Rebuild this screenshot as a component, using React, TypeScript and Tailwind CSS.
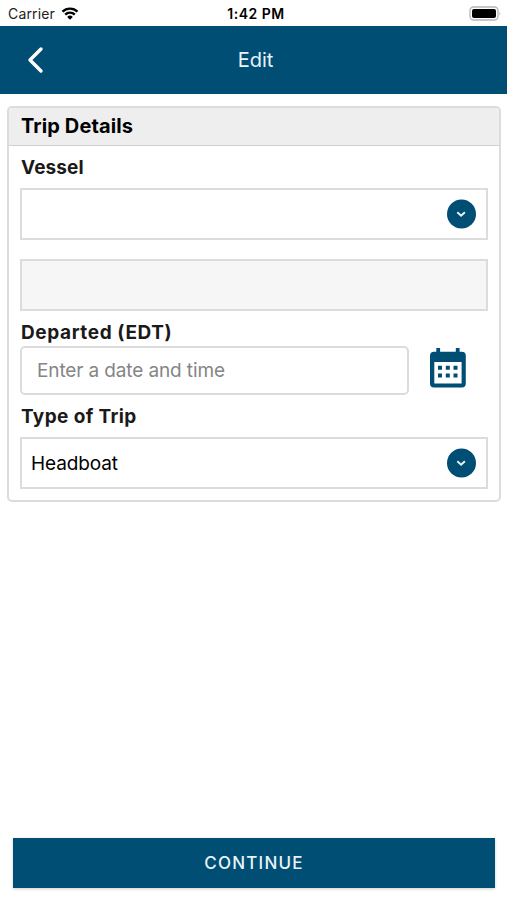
import type { ReactNode } from "react";

export default function App() {
  return (
    <div className="flex h-[900px] w-[507px] flex-col overflow-hidden bg-white font-['Inter','Liberation_Sans',sans-serif] text-[#111]">
      <StatusBar />
      <NavBar title="Edit" />

      <main className="flex flex-1 flex-col px-[7px] pt-3">
        <TripDetails />
      </main>

      <footer className="pr-3 pb-3 pl-[13px]">
        <button
          type="button"
          className="block h-[50px] w-full bg-[#004e73] text-center text-[17px] leading-[50px] font-medium tracking-[1.2px] text-[#e8f3fa] shadow-[0_1px_3px_rgba(0,0,0,0.2)]"
        >
          CONTINUE
        </button>
      </footer>
    </div>
  );
}

function StatusBar() {
  return (
    <div className="grid h-[26px] grid-cols-3 items-center pr-[6px] pl-2 text-black">
      <div className="flex items-center gap-[6px]">
        <span className="pt-px text-[14px] leading-[25px] tracking-[0.15px] text-[#222]">Carrier</span>
        <WifiIcon />
      </div>
      <span className="pt-px pl-[3px] text-center text-[14px] leading-[25px] font-semibold tracking-[0.5px]">
        1:42 PM
      </span>
      <BatteryIcon />
    </div>
  );
}

function NavBar({ title }: { title: string }) {
  return (
    <header className="grid h-[68px] grid-cols-3 items-center bg-[#004e73]">
      <button type="button" aria-label="Back" className="pl-[27px]">
        <svg width="17" height="28" viewBox="0 0 17 28" fill="none">
          <path d="M14 3 3 14l11 11" stroke="#fff" strokeWidth="3.4" strokeLinecap="round" strokeLinejoin="round" />
        </svg>
      </button>
      <h1 className="pl-1 text-center text-[20px] text-[#e8f3fa]">{title}</h1>
    </header>
  );
}

function TripDetails() {
  return (
    <section className="h-[396px] w-[494px] overflow-hidden rounded-[5px] border-2 border-[#dcdcdc]">
      <h2 className="h-[38px] border-b border-[#cfcfcf] bg-[#eeeeee] pl-[12px] text-[20px] leading-[37px] font-bold tracking-[0.12px] text-black">
        Trip Details
      </h2>

      <div className="px-[11px]">
        <Label className="h-[42px] leading-[43px] tracking-[0.1px]">Vessel</Label>
        <SelectBox />
        <div className="mt-[19px] h-[52px] border-2 border-[#dcdcdc] bg-[#f6f6f6]" />

        <Label className="h-[35px] leading-[43px] tracking-[0.6px]">Departed (EDT)</Label>
        <div className="flex items-start">
          <input
            type="text"
            placeholder="Enter a date and time"
            className="h-[49px] w-[389px] rounded-[5px] border-2 border-[#dcdcdc] pl-[15px] text-[19px] tracking-[-0.12px] placeholder:text-[#858585]"
          />
          <CalendarIcon />
        </div>

        <Label className="h-[42px] leading-[43px] tracking-[0.38px]">Type of Trip</Label>
        <SelectBox value="Headboat" />
      </div>
    </section>
  );
}

function Label({ className, children }: { className: string; children: ReactNode }) {
  return <div className={`pl-px text-[19px] font-bold text-[#1a1a1a] ${className}`}>{children}</div>;
}

function SelectBox({ value }: { value?: string }) {
  return (
    <div className="flex h-[52px] items-center justify-between border-2 border-[#dcdcdc] bg-white pr-[10px] pl-[9px]">
      <span className="pt-[2px] text-[19px] tracking-[-0.12px] text-black">{value}</span>
      <svg width="30" height="30" viewBox="0 0 30 30" fill="none">
        <circle cx="15.500" cy="15" r="14.500" fill="#004e73" />
        <path d="m11.300 13.300 3.800 3.500 3.800-3.500" stroke="#e8f3fa" strokeWidth="1.900" />
      </svg>
    </div>
  );
}

function CalendarIcon() {
  return (
    <svg width="36" height="40" viewBox="0 0 36 40" className="mt-[2px] ml-[21px]" fill="#004e73">
      <path
        fillRule="evenodd"
        d="M6.300 0h3.800v3.800h15.700V0h3.800v3.800h2.200a4 4 0 0 1 4 4v27.600a4 4 0 0 1-4 4H4a4 4 0 0 1-4-4V7.800a4 4 0 0 1 4-4h2.300ZM4.300 14v21.600h27.300V14Z"
      />
      <path d="M8 17.700h4v4H8zM15.800 17.700h4v4h-4zM23.500 17.700h4v4h-4zM8 25.500h4v4H8zM15.800 25.500h4v4h-4zM23.500 25.500h4v4h-4z" />
    </svg>
  );
}

function WifiIcon() {
  return (
    <svg width="18" height="13" viewBox="0 0 17 13" fill="none" stroke="#000" strokeWidth="2.400">
      <path d="M1 4.700a10.600 10.600 0 0 1 15 0" />
      <path d="M3.700 7.600a6.800 6.800 0 0 1 9.600 0" />
      <path d="M8.500 12.700 5.700 9.900a4 4 0 0 1 5.600 0Z" fill="#000" stroke="none" />
    </svg>
  );
}

function BatteryIcon() {
  return (
    <svg width="32" height="15" viewBox="0 0 32 15" className="justify-self-end">
      <rect x="1" y="1" width="28" height="13" rx="3.500" fill="#fff" stroke="#b5b5b5" strokeWidth="1.300" />
      <rect x="3" y="3" width="24" height="9" rx="2" fill="#000" />
      <path d="M30.500 5.500q1.500 2 0 4Z" fill="#aaa" />
    </svg>
  );
}
